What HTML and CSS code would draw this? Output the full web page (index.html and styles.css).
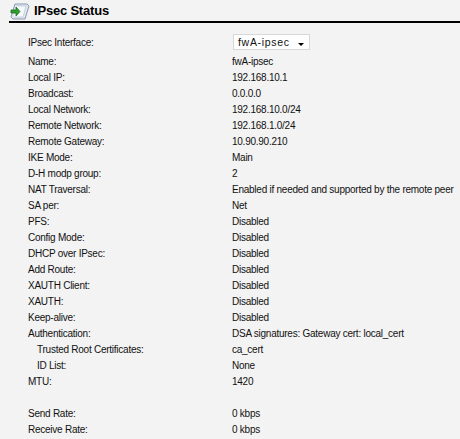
FILE: index.html
```html
<!DOCTYPE html>
<html lang="en">
<head>
	<meta charset="UTF-8">
	<title>IPsec Status</title>
	<link rel="stylesheet" href="styles.css">
</head>
<body>
	<section class="panel">
		<header class="panel_head">
			<svg class="icon" width="20" height="18" viewBox="0 0 20 18">
				<path d="M5 2 L17 2 L19 4 L15 17 L3 17 L1 15 Z" fill="#dfe6ee" stroke="#8a9bb0" stroke-width="1"/>
				<path d="M6 4 L16 4 L13 15 L4 15" fill="#f6f8fb" stroke="#b4c0ce" stroke-width="0.6"/>
				<path d="M1 8 L6 8 L6 5 L10 9.5 L6 14 L6 11 L1 11 Z" fill="#2fa02f" stroke="#1c6e1c" stroke-width="0.8"/>
			</svg>
			<h1>IPsec Status</h1>
		</header>
		<div class="rows">
			<div class="row sel_row">
				<span class="lbl">IPsec Interface:</span>
				<span class="select">fwA-ipsec<i class="arrow"></i></span>
			</div>
			<div class="row"><span class="lbl">Name:</span><span>fwA-ipsec</span></div>
			<div class="row"><span class="lbl">Local IP:</span><span>192.168.10.1</span></div>
			<div class="row"><span class="lbl">Broadcast:</span><span>0.0.0.0</span></div>
			<div class="row"><span class="lbl">Local Network:</span><span>192.168.10.0/24</span></div>
			<div class="row"><span class="lbl">Remote Network:</span><span>192.168.1.0/24</span></div>
			<div class="row"><span class="lbl">Remote Gateway:</span><span>10.90.90.210</span></div>
			<div class="row"><span class="lbl">IKE Mode:</span><span>Main</span></div>
			<div class="row"><span class="lbl">D-H modp group:</span><span>2</span></div>
			<div class="row"><span class="lbl">NAT Traversal:</span><span>Enabled if needed and supported by the remote peer</span></div>
			<div class="row"><span class="lbl">SA per:</span><span>Net</span></div>
			<div class="row"><span class="lbl">PFS:</span><span>Disabled</span></div>
			<div class="row"><span class="lbl">Config Mode:</span><span>Disabled</span></div>
			<div class="row"><span class="lbl">DHCP over IPsec:</span><span>Disabled</span></div>
			<div class="row"><span class="lbl">Add Route:</span><span>Disabled</span></div>
			<div class="row"><span class="lbl">XAUTH Client:</span><span>Disabled</span></div>
			<div class="row"><span class="lbl">XAUTH:</span><span>Disabled</span></div>
			<div class="row"><span class="lbl">Keep-alive:</span><span>Disabled</span></div>
			<div class="row"><span class="lbl">Authentication:</span><span>DSA signatures: Gateway cert: local_cert</span></div>
			<div class="row"><span class="lbl sub">Trusted Root Certificates:</span><span>ca_cert</span></div>
			<div class="row"><span class="lbl sub">ID List:</span><span>None</span></div>
			<div class="row"><span class="lbl">MTU:</span><span>1420</span></div>
			<div class="row"></div>
			<div class="row"><span class="lbl">Send Rate:</span><span>0 kbps</span></div>
			<div class="row"><span class="lbl">Receive Rate:</span><span>0 kbps</span></div>
		</div>
	</section>
</body>
</html>
```

FILE: styles.css
```css
*{margin:0;padding:0;}
body{
	background: #f3f3f3;
	font-family: "Liberation Sans", Arial, sans-serif;
	font-size: 10px;
	letter-spacing: -0.25px;
	color: #111;
}
.panel{
	padding: 0 0 0 9px;
}
.panel_head{
	display: flex;
	align-items: center;
	height: 21px;
	border-bottom: 2px solid #000;
}
.panel_head .icon{
	margin: 0 4px 0 1px;
}
.panel_head h1{
	font-size: 13px;
	letter-spacing: -0.2px;
	font-weight: bold;
	color: #000;
}
.rows{
	padding: 8px 0 0 19px;
	white-space: nowrap;
}
.row{
	display: flex;
	align-items: center;
	height: 16px;
}
.row .lbl{
	width: 204px;
	flex: none;
}
.row .lbl.sub{
	padding-left: 9px;
	width: 195px;
}
.sel_row{
	height: 22px;
}
.select{
	display: flex;
	align-items: center;
	box-sizing: border-box;
	width: 77px;
	height: 16px;
	margin-left: 1px;
	padding-left: 4px;
	background: #fff;
	border: 1px solid #d8d8d8;
	font-size: 10.5px;
	letter-spacing: 0.7px;
	position: relative;
}
.select .arrow{
	position: absolute;
	right: 5px;
	top: 8px;
	border-left: 3.5px solid transparent;
	border-right: 3.5px solid transparent;
	border-top: 3.5px solid #000;
}
```
